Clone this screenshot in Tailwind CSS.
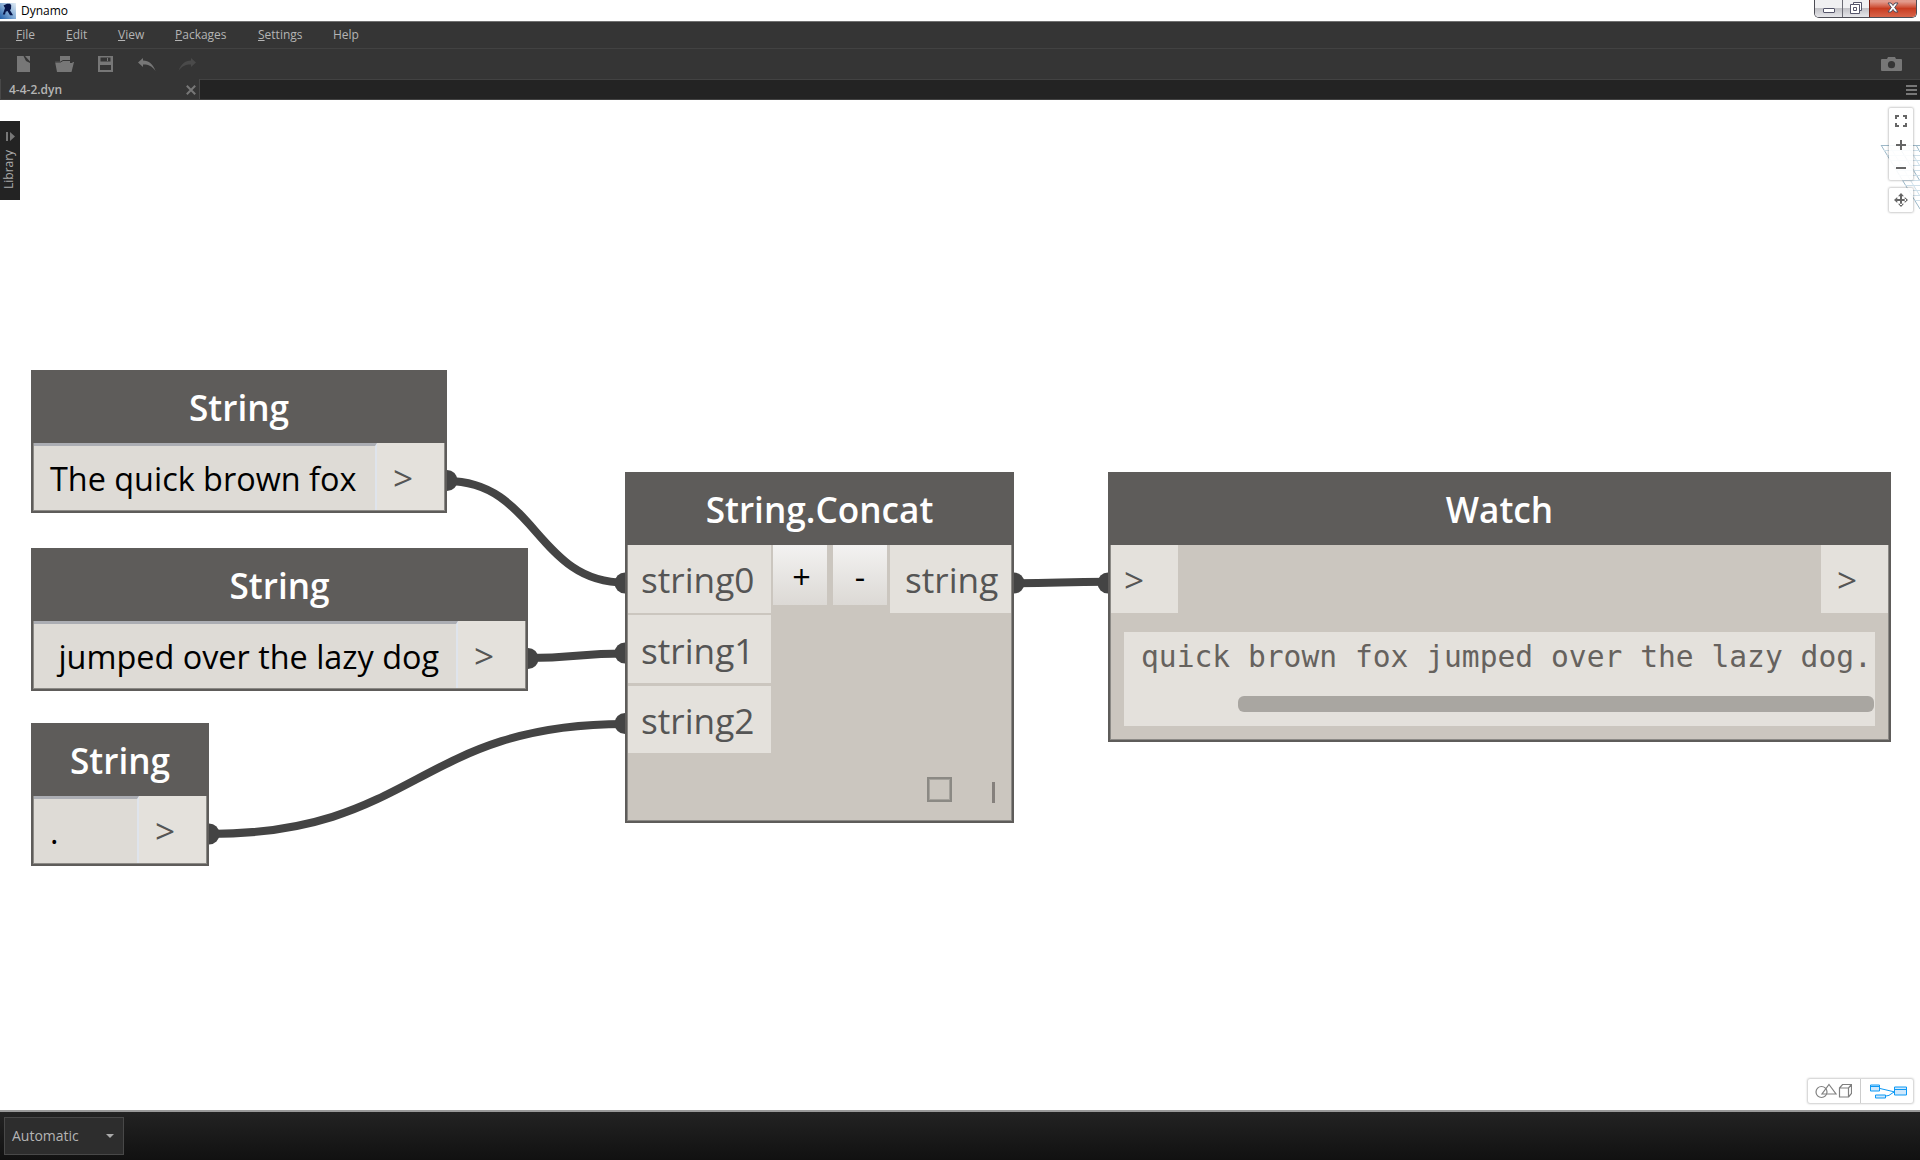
<!DOCTYPE html>
<html lang="en">
<head>
<meta charset="utf-8">
<title>Dynamo</title>
<script src="https://cdn.jsdelivr.net/npm/@tailwindcss/browser@4"></script>
</head>
<body class="w-[1920px] h-[1160px] overflow-hidden bg-white flex flex-col font-['Open_Sans',sans-serif]">

<!-- Title bar -->
<header class="h-[21px] shrink-0 flex items-start justify-between bg-white">
  <div class="flex items-center pt-[3px]">
    <svg class="w-4 h-4" viewBox="0 0 16 16">
      <defs><linearGradient id="lg" x1="0" y1="1" x2="1" y2="0"><stop offset="0" stop-color="#1c5ba8"/><stop offset=".5" stop-color="#86add6"/><stop offset="1" stop-color="#e3edf6"/></linearGradient></defs>
      <rect width="16" height="16" fill="url(#lg)"/>
      <path d="M3.500 2.500L7 .8h3l1.200 1.500-.2 3.500-1 1.500 3 5H10L7.500 8l-1.800.8L5 11.500H2.800L5 5z" fill="#06154a"/>
    </svg>
    <span class="ml-[5px] text-[12px] leading-4 text-black">Dynamo</span>
  </div>
  <div class="flex w-[103px] h-[18px] mr-[3px] rounded-b-[5px] border border-t-0 border-[#4d4d55] overflow-hidden">
    <div class="w-[28px] border-r border-[#6b6b74] bg-linear-to-b from-[#f0f0f2] from-45% via-[#c2c2c7] via-50% to-[#e6e6ea] flex justify-center pt-2"><div class="w-3 h-[5px] border border-[#55556b] rounded-[1px] bg-white"></div></div>
    <div class="w-[26px] bg-linear-to-b from-[#f0f0f2] from-45% via-[#c2c2c7] via-50% to-[#e6e6ea] flex justify-center">
      <svg class="w-3 h-3 mt-[2px] mr-px" viewBox="0 0 12 12" fill="#fff" stroke="#55556b"><path d="M3.500 .5h8v8h-8z"/><path d="M.5 2.500h9v9h-9z"/><path d="M3.500 5.500h3v3h-3z"/></svg>
    </div>
    <div class="flex-1 border-l border-[#7a1d10] bg-linear-to-b from-[#e29a8c] from-10% via-[#c83c20] via-50% to-[#d8644a] flex justify-center">
      <svg class="w-3 h-[11px] mt-[2px]" viewBox="0 0 12 11"><path d="M1 1h3l2 2.500L8 1h3L7.700 5.500 11 10H8L6 7.500 4 10H1l3.300-4.500z" fill="#fff" stroke="#4d4d5c"/></svg>
    </div>
  </div>
</header>

<!-- Menu -->
<nav class="h-[27px] shrink-0 flex items-center gap-[31px] pl-4 bg-[#353535] border-t border-[#707070] text-[12px] leading-4 text-[#b4b4b4]">
  <span class="w-[19px]"><u>F</u>ile</span>
  <span class="w-[21px]"><u>E</u>dit</span>
  <span class="w-[26px]"><u>V</u>iew</span>
  <span class="w-[52px]"><u>P</u>ackages</span>
  <span class="w-[44px]"><u>S</u>ettings</span>
  <span>Help</span>
</nav>

<!-- Toolbar -->
<div class="h-[31px] shrink-0 flex items-center justify-between bg-[#353535] border-t border-[#424242] pl-[17px] pr-[18px]">
  <div class="flex items-center">
    <svg class="w-[13px] h-4" viewBox="0 0 13 16" fill="#777"><path d="M0 0h6.500L9 5l4 2v9H0z"/><path d="M8 0h5v5.500z"/></svg>
    <svg class="w-[20px] h-4 ml-[25px]" viewBox="0 0 20 16" fill="#777"><path d="M5 0h10v7h2.500V6H19l-2.500 10H2L0 5.500h5z"/><path d="M0 6h5.500L8 4.500h7" stroke="#353535" fill="none"/></svg>
    <svg class="w-[15px] h-4 ml-[23px]" viewBox="0 0 15 16"><path d="M0 0h15v16H0z" fill="#777"/><path d="M2.500 1.500h10v4h-10zM2 9h11v5H2z" fill="#353535"/><path d="M9 2h1v3H9z" fill="#777"/></svg>
    <svg class="w-[18px] h-[13px] ml-[25px]" viewBox="0 0 18 13" fill="#777"><path d="M5 0v2.500C11 2.800 15 6 17.500 13 14 8 10 6.300 5 6.500V9L0 4.500z"/></svg>
    <svg class="w-[18px] h-[13px] ml-[22px]" viewBox="0 0 18 13" fill="#4a4a4a"><path d="M13 0v2.500C7 2.800 3 6 .5 13 4 8 8 6.300 13 6.500V9l5-4.500z"/></svg>
  </div>
  <svg class="w-[21px] h-[14px]" viewBox="0 0 21 14"><path d="M1 2h5l1-2h7l1 2h5q1 0 1 1v10q0 1-1 1H1q-1 0-1-1V3q0-1 1-1z" fill="#777"/><circle cx="10.500" cy="7.700" r="3.600" fill="#353535"/></svg>
</div>

<!-- Workspace tabs -->
<div class="h-[21px] shrink-0 flex bg-[#232323] border-b border-[#424242]">
  <div class="w-[200px] flex items-center justify-between bg-[#353535] border-x border-[#484848] pl-2 pr-[3px] pt-px text-[12px] leading-4 font-semibold text-[#b4b4b4]">
    <span>4-4-2.dyn</span>
    <svg class="w-[10px] h-[10px]" viewBox="0 0 10 10"><path d="M.8 .8l8.400 8.400m0-8.400L.8 9.200" stroke="#777" stroke-width="2"/></svg>
  </div>
  <div class="flex-1 border-t border-[#424242] flex items-center justify-end pr-[3px]">
    <svg class="w-[11px] h-[10px]" viewBox="0 0 11 10" fill="#777"><path d="M0 0h11v2H0zM0 4h11v2H0zM0 8h11v2H0z"/></svg>
  </div>
</div>

<!-- Canvas -->
<main class="relative flex-1 bg-white overflow-hidden">
  <!-- Connectors; view box is in window coordinates -->
  <svg class="absolute left-0 top-0 w-[1920px] h-[1010px]" viewBox="0 100 1920 1010" fill="none">
    <g stroke="#444" stroke-width="8">
      <path d="M447 481C536 481 536 582.700 625 582.700"/>
      <path d="M528 658C576 658 577 653.500 625 653.500"/>
      <path d="M209 834C417 834 417 724 625 724"/>
      <path d="M1014 583.300C1060 583.300 1060 581.700 1108 581.700"/>
    </g>
    <g fill="#444">
      <circle cx="447" cy="480.500" r="10.500"/><circle cx="528" cy="658.500" r="10.500"/><circle cx="209" cy="834" r="10.500"/>
      <circle cx="625" cy="583" r="10.500"/><circle cx="625" cy="653" r="10.500"/><circle cx="625" cy="723.500" r="10.500"/>
      <circle cx="1014" cy="583" r="10.500"/><circle cx="1108" cy="583" r="10.500"/>
    </g>
    <g stroke="#b4cbd9" stroke-width="1">
      <path d="M1881 145.500h39M1881 145l39 64M1898 145l22 36M1916 145l4 7" stroke="#9db8c8"/>
      <path d="M1884 150.500h36M1887 155.500h33M1890 160.500h30M1893 165.500h27M1896 170.500h24M1899 175.500h21M1902 180.500h18M1905 185.500h15M1908 190.500h12M1911 195.500h9M1914 200.500h6M1889 145l31 51M1907 145l13 21" stroke="#cfe0ea"/>
    </g>
  </svg>

  <!-- Library handle -->
  <aside class="absolute left-0 top-[21px] w-5 h-[79px] bg-[#232323] flex flex-col items-center">
    <svg class="w-[9px] h-[9px] mt-[11px]" viewBox="0 0 9 9" fill="#777"><path d="M0 0h2v9H0zM4 0l5 4.500L4 9z"/></svg>
    <span class="mt-[8px] -ml-[2px] h-10 rotate-180 [writing-mode:vertical-rl] text-[12px] leading-4 text-[#aaa]">Library</span>
  </aside>

  <!-- Input nodes -->
  <section class="absolute left-[31px] top-[270px] w-[416px] h-[143px] bg-[#5e5c5a] flex flex-col px-[2px] pb-[2px]">
    <h2 class="h-[73px] shrink-0 pt-[13px] text-center text-[35.200px] leading-[48px] font-semibold text-white">String</h2>
    <div class="flex-1 flex border border-t-0 border-[#8c8a86] bg-[#e4e1dc]">
      <div class="w-[343px] border-t-3 border-t-[#abadb3] border-r-2 border-r-[#dfe4ec] bg-[#dedbd6] pl-4 pt-[10px] text-[32.400px] leading-[44px] whitespace-pre text-black">The quick brown fox</div>
      <div class="flex-1 pl-4 pt-[10px] text-[35.200px] leading-[48px] text-[#555]">&gt;</div>
    </div>
  </section>
  <section class="absolute left-[31px] top-[448px] w-[497px] h-[143px] bg-[#5e5c5a] flex flex-col px-[2px] pb-[2px]">
    <h2 class="h-[73px] shrink-0 pt-[13px] text-center text-[35.200px] leading-[48px] font-semibold text-white">String</h2>
    <div class="flex-1 flex border border-t-0 border-[#8c8a86] bg-[#e4e1dc]">
      <div class="w-[424px] border-t-3 border-t-[#abadb3] border-r-2 border-r-[#dfe4ec] bg-[#dedbd6] pl-4 pt-[10px] text-[32.400px] leading-[44px] whitespace-pre text-black"> jumped over the lazy dog</div>
      <div class="flex-1 pl-4 pt-[10px] text-[35.200px] leading-[48px] text-[#555]">&gt;</div>
    </div>
  </section>
  <section class="absolute left-[31px] top-[623px] w-[178px] h-[143px] bg-[#5e5c5a] flex flex-col px-[2px] pb-[2px]">
    <h2 class="h-[73px] shrink-0 pt-[13px] text-center text-[35.200px] leading-[48px] font-semibold text-white">String</h2>
    <div class="flex-1 flex border border-t-0 border-[#8c8a86] bg-[#e4e1dc]">
      <div class="w-[105px] border-t-3 border-t-[#abadb3] border-r-2 border-r-[#dfe4ec] bg-[#dedbd6] pl-4 pt-[10px] text-[32.400px] leading-[44px] whitespace-pre text-black">.</div>
      <div class="flex-1 pl-4 pt-[10px] text-[35.200px] leading-[48px] text-[#555]">&gt;</div>
    </div>
  </section>

  <!-- String.Concat -->
  <section class="absolute left-[625px] top-[372px] w-[389px] h-[351px] bg-[#5e5c5a] flex flex-col px-[2px] pb-[2px]">
    <h2 class="h-[73px] shrink-0 pt-[13px] text-center text-[35.200px] leading-[48px] font-semibold text-white">String.Concat</h2>
    <div class="flex-1 flex flex-col justify-between border border-t-0 border-[#8c8a86] bg-[#cbc6bf]">
      <div class="flex items-start">
        <div class="flex flex-col w-[143px] text-[35.200px] leading-[48px] text-[#555]">
          <div class="h-[68px] mb-[2px] pl-[13px] pt-[10px] bg-[#e4e1dc]">string0</div>
          <div class="h-[68px] mb-[3px] pl-[13px] pt-[11px] bg-[#e4e1dc]">string1</div>
          <div class="h-[67px] pl-[13px] pt-[10px] bg-[#e4e1dc]">string2</div>
        </div>
        <div class="ml-[2px] w-[54px] h-[60px] pt-[9px] pl-[3px] text-center text-[32.400px] leading-[44px] text-black bg-linear-to-b from-[#f3f2f1] to-[#dcd9d5]">+</div>
        <div class="ml-[6px] w-[54px] h-[60px] pt-[9px] text-center text-[32.400px] leading-[44px] text-black bg-linear-to-b from-[#f3f2f1] to-[#dcd9d5]">-</div>
        <div class="ml-[3px] flex-1 h-[68px] pl-[15px] pt-[10px] text-[35.200px] leading-[48px] text-[#555] bg-[#e4e1dc]">string</div>
      </div>
      <div class="flex items-start justify-end pr-4 pb-[17px] gap-10">
        <div class="w-[25px] h-[25px] border-2 border-[#8b8984] p-0 outline-1 -outline-offset-3 outline-[#a5a29c]"></div>
        <div class="mt-[5px] w-[3px] h-[21px] bg-[#85807c]"></div>
      </div>
    </div>
  </section>

  <!-- Watch -->
  <section class="absolute left-[1108px] top-[372px] w-[783px] h-[270px] bg-[#5e5c5a] flex flex-col px-[2px] pb-[2px]">
    <h2 class="h-[73px] shrink-0 pt-[13px] text-center text-[35.200px] leading-[48px] font-semibold text-white">Watch</h2>
    <div class="flex-1 flex flex-col border border-t-0 border-[#8c8a86] bg-[#cbc6bf]">
      <div class="flex justify-between text-[35.200px] leading-[48px] text-[#555]">
        <div class="w-[67px] h-[68px] pl-[13px] pt-[10px] bg-[#e4e1dc]">&gt;</div>
        <div class="w-[67px] h-[68px] pl-4 pt-[10px] bg-[#e4e1dc]">&gt;</div>
      </div>
      <div class="mt-[19px] ml-[13px] mr-[13px] h-[94px] bg-[#e4e1dc] flex flex-col">
        <div class="h-[64px] pl-[17px] pt-[5px] font-['DejaVu_Sans_Mono',monospace] text-[29.620px] leading-[40px] whitespace-pre text-[#66625e]">quick brown fox jumped over the lazy dog.</div>
        <div class="self-end mr-px w-[636px] h-4 rounded-[6px] bg-[#a9a6a1]"></div>
      </div>
    </div>
  </section>

  <!-- Zoom and pan controls -->
  <div class="absolute right-[7px] top-[8px] flex flex-col gap-2">
    <div class="w-6 h-[72px] rounded-[2px] bg-white/90 shadow-[0_0_2px_1px_rgba(0,0,0,0.2)] flex flex-col items-center pt-[7px]">
      <svg class="w-3 h-3" viewBox="0 0 12 12" fill="none" stroke="#666" stroke-width="2"><path d="M1 4V1h3M8 1h3v3M11 8v3H8M4 11H1V8"/></svg>
      <svg class="w-[10px] h-[10px] mt-[13px]" viewBox="0 0 10 10" stroke="#666" stroke-width="2"><path d="M0 5h10M5 0v10"/></svg>
      <div class="w-[10px] h-[2px] mt-[17px] bg-[#666]"></div>
    </div>
    <div class="w-6 h-6 rounded-[2px] bg-white/90 shadow-[0_0_2px_1px_rgba(0,0,0,0.2)] flex items-center justify-center">
      <svg class="w-[14px] h-[14px]" viewBox="0 0 14 14" fill="#666"><path d="M6 2h2v10H6zM2 6h10v2H2zM7 0l3 3.300H4zM7 14l3-3.300H4zM0 7l3.300-3v6zM14 7l-3.300-3v6z"/></svg>
    </div>
  </div>

  <!-- View switch -->
  <div class="absolute right-[7px] bottom-[7px] w-[105px] h-[24px] rounded-[2px] bg-white shadow-[0_0_2px_1px_rgba(0,0,0,0.2)] flex">
    <div class="w-[53px] border-r border-[#ccc] flex items-center justify-center pr-px">
      <svg class="w-[37px] h-[16px]" viewBox="0 0 37 16" fill="none" stroke="#808080" stroke-width="1.200"><circle cx="6.500" cy="9" r="5.500"/><path d="M14 1.500l7 9.500H7zM24.500 5h9v9h-9zM24.500 5l3-3.500h9v9l-3 3.500M33.500 5l3-3.500"/></svg>
    </div>
    <div class="flex-1 flex items-center justify-center pl-[3px]">
      <svg class="w-[37px] h-[15px]" viewBox="0 0 37 15" fill="#cfe8fc" stroke="#0d99f5"><path d="M10 4.500l15 3.500M16 12c5 0 5-4 10-4" fill="none"/><path d="M.5 1h9v6h-9zM5.500 11h10v3h-10zM24.500 3h12v8h-12z"/><path d="M0 2.500h10M24 5.500h13"/></svg>
    </div>
  </div>
</main>

<!-- Status bar -->
<footer class="h-[50px] shrink-0 border-t-2 border-[#999] bg-linear-to-b from-[#232323] to-[#111] flex items-start pt-[5px] pl-1">
  <div class="w-[120px] h-[38px] border border-[#484848] bg-[#2d2d2d] flex items-center justify-between pl-[7px] pr-[9px] text-[14px] text-[#b4b4b4]">
    <span class="pb-[2px]">Automatic</span>
    <svg class="w-2 h-1" viewBox="0 0 8 4"><path d="M0 0h8L4 4z" fill="#aaa"/></svg>
  </div>
</footer>
</body>
</html>
